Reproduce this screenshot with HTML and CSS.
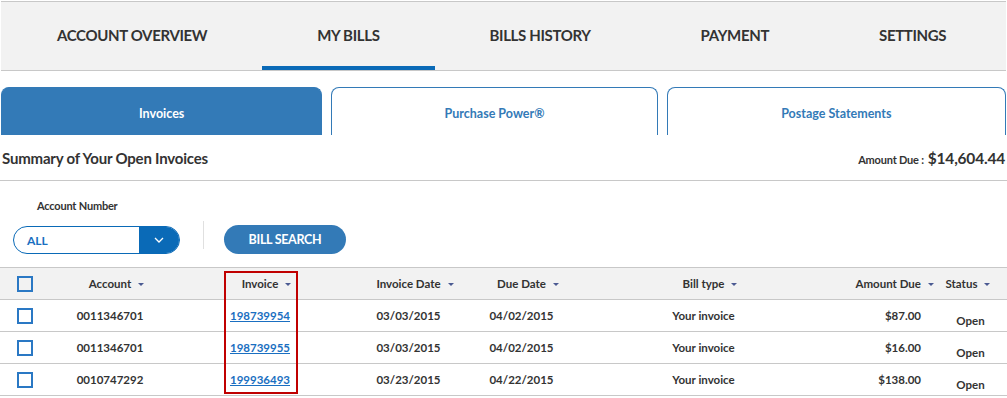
FILE: index.html
```html
<!DOCTYPE html>
<html lang="en">
<head>
<meta charset="utf-8">
<title>My Bills</title>
<link rel="stylesheet" href="styles.css">
</head>
<body>
<nav class="topnav">
  <a class="nav-item">ACCOUNT OVERVIEW</a>
  <a class="nav-item active">MY BILLS</a>
  <a class="nav-item">BILLS HISTORY</a>
  <a class="nav-item">PAYMENT</a>
  <a class="nav-item">SETTINGS</a>
</nav>

<div class="tabs">
  <div class="tab selected">Invoices</div>
  <div class="tab">Purchase Power®</div>
  <div class="tab">Postage Statements</div>
</div>

<div class="summary">
  <h2 class="summary-title">Summary of Your Open Invoices</h2>
  <div class="summary-amount"><span class="amount-label">Amount Due :</span> <span class="amount-value">$14,604.44</span></div>
</div>

<div class="filters">
  <div class="field">
    <div class="field-label">Account Number</div>
    <div class="select">
      <span class="select-value">ALL</span>
      <span class="select-btn">
        <svg width="10" height="6" viewBox="0 0 10 6"><path d="M1 1 L5 5 L9 1" fill="none" stroke="#fff" stroke-width="1.3"/></svg>
      </span>
    </div>
  </div>
  <div class="divider"></div>
  <button class="btn-search">BILL SEARCH</button>
</div>

<div class="table-wrap">
  <div class="grid head">
    <div class="cell cb-cell"><span class="checkbox"></span></div>
    <div class="cell"><span class="sort">Account</span></div>
    <div class="cell"><span class="sort">Invoice</span></div>
    <div class="cell"><span class="sort">Invoice Date</span></div>
    <div class="cell"><span class="sort">Due Date</span></div>
    <div class="cell"><span class="sort">Bill type</span></div>
    <div class="cell amt"><span class="sort">Amount Due</span></div>
    <div class="cell status-h"><span class="sort">Status</span></div>
  </div>
  <div class="grid row">
    <div class="cell cb-cell"><span class="checkbox"></span></div>
    <div class="cell">0011346701</div>
    <div class="cell"><a class="inv-link">198739954</a></div>
    <div class="cell">03/03/2015</div>
    <div class="cell">04/02/2015</div>
    <div class="cell">Your invoice</div>
    <div class="cell amt">$87.00</div>
    <div class="cell status">Open</div>
  </div>
  <div class="grid row">
    <div class="cell cb-cell"><span class="checkbox"></span></div>
    <div class="cell">0011346701</div>
    <div class="cell"><a class="inv-link">198739955</a></div>
    <div class="cell">03/03/2015</div>
    <div class="cell">04/02/2015</div>
    <div class="cell">Your invoice</div>
    <div class="cell amt">$16.00</div>
    <div class="cell status">Open</div>
  </div>
  <div class="grid row">
    <div class="cell cb-cell"><span class="checkbox"></span></div>
    <div class="cell">0010747292</div>
    <div class="cell"><a class="inv-link">199936493</a></div>
    <div class="cell">03/23/2015</div>
    <div class="cell">04/22/2015</div>
    <div class="cell">Your invoice</div>
    <div class="cell amt">$138.00</div>
    <div class="cell status">Open</div>
  </div>
  <div class="highlight"></div>
</div>
</body>
</html>
```

FILE: styles.css
```css
* { box-sizing: border-box; }
html, body { margin: 0; padding: 0; background: #fff; }
body {
  font-family: Lato, "Open Sans", "Liberation Sans", sans-serif;
  color: #333;
  width: 1007px;
  overflow: hidden;
}

.topnav {
  margin: 1px 1px 0 1px;
  height: 70px;
  background: #f2f2f2;
  border-top: 1px solid #c8c8c8;
  border-bottom: 1px solid #c8c8c8;
  display: flex;
  padding-left: 1px;
}
.nav-item {
  display: flex;
  align-items: center;
  padding: 2px 55px 0;
  font-size: 15px;
  font-weight: 700;
  color: #333;
  letter-spacing: -0.35px;
  border-bottom: 4px solid transparent;
  white-space: nowrap;
}
.nav-item.active { border-bottom-color: #0a6ab7; }

.tabs {
  display: grid;
  grid-template-columns: 321fr 326fr 339fr;
  gap: 9px;
  margin: 16px 1px 0 1px;
}
.tab {
  height: 48px;
  display: flex;
  align-items: center;
  justify-content: center;
  padding-top: 4px;
  font-size: 12.5px;
  font-weight: 700;
  color: #337ab7;
  border: 1px solid #337ab7;
  border-bottom: none;
  border-radius: 8px 8px 0 0;
  background: #fff;
}
.tab.selected { background: #337ab7; color: #fff; }

.summary {
  display: flex;
  justify-content: space-between;
  align-items: center;
  height: 46px;
  padding: 0 2px 0 2px;
  border-bottom: 1px solid #c8c8c8;
}
.summary-title { margin: 0; font-size: 15px; font-weight: 700; color: #333; letter-spacing: -0.2px; }
.summary-amount { font-weight: 700; color: #333; }
.amount-label { font-size: 11px; letter-spacing: -0.2px; }
.amount-value { font-size: 15.5px; letter-spacing: -0.2px; }

.filters {
  display: flex;
  align-items: flex-end;
  height: 87px;
  padding: 0 0 13px 13px;
  border-bottom: 1px solid #c8c8c8;
}
.field { display: flex; flex-direction: column; }
.field-label {
  font-size: 11px;
  font-weight: 700;
  padding-left: 24px;
  margin-bottom: 14px;
  letter-spacing: -0.2px;
}
.select {
  width: 167px;
  height: 28px;
  border: 1px solid #0a6ab7;
  border-radius: 14px;
  display: flex;
  overflow: hidden;
}
.select-value {
  flex: 1;
  display: flex;
  align-items: center;
  padding-left: 13px;
  font-size: 12px;
  font-weight: 700;
  color: #1a6fc1;
}
.select-btn {
  width: 40px;
  background: #0a6ab7;
  display: flex;
  align-items: center;
  justify-content: center;
}
.divider {
  width: 1px;
  height: 28px;
  background: #e0e0e0;
  margin: 0 20px 5px 23px;
}
.btn-search {
  width: 122px;
  height: 29px;
  border: none;
  border-radius: 15px;
  background: #337ab7;
  color: #fff;
  font-family: inherit;
  font-size: 12.5px;
  font-weight: 700;
  letter-spacing: -0.3px;
  padding: 0;
}

.table-wrap { position: relative; }
.grid {
  display: grid;
  grid-template-columns: 48px 124px 176px 121px 105px 259px 101px 73px;
  border-bottom: 1px solid #c8c8c8;
  font-size: 11.5px;
  font-weight: 700;
}
.grid.head { background: #f2f2f2; height: 32px; }
.grid.row { height: 32px; }
.cell {
  display: flex;
  align-items: center;
  justify-content: center;
  white-space: nowrap;
}
.cb-cell { justify-content: flex-start; padding-left: 17px; }
.checkbox {
  width: 16px;
  height: 16px;
  border: 2px solid #2a78c4;
  display: block;
}
.sort { position: relative; }
.sort::after {
  content: "";
  position: absolute;
  left: calc(100% + 7px);
  top: 50%;
  margin-top: -1px;
  border-left: 3px solid transparent;
  border-right: 3px solid transparent;
  border-top: 3px solid #4b5a92;
}
.amt { justify-content: flex-end; padding-right: 13px; }
.status-h { padding-right: 18px; }
.status { padding-top: 9px; }
.inv-link { color: #1a6fc1; text-decoration: underline; }

.highlight {
  position: absolute;
  left: 224px;
  top: 3px;
  width: 74px;
  height: 123px;
  border: 2px solid #c00000;
  pointer-events: none;
}
```
